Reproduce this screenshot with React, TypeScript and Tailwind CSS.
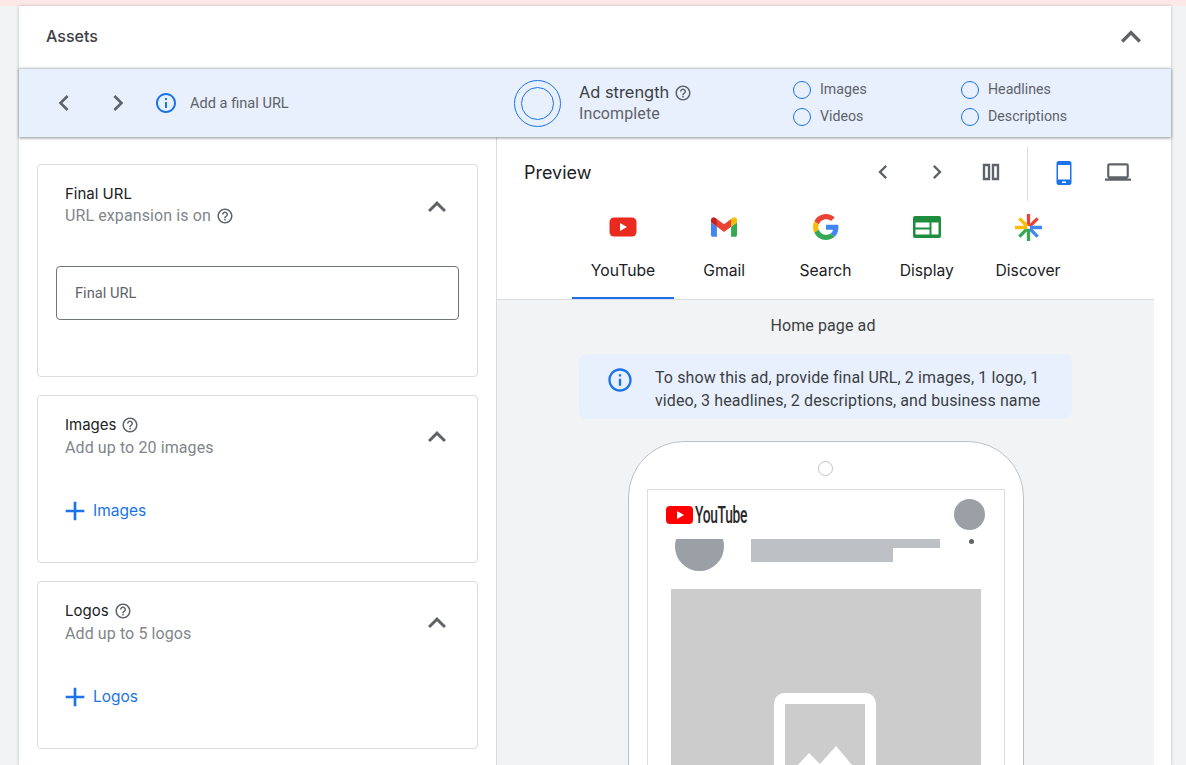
const HEADING = "font-['Inter','Noto_Sans',sans-serif]";

const Icon = ({ d, size, className }: { d: string; size: number; className?: string }) => (
  <svg width={size} height={size} viewBox="0 0 24 24" fill="currentColor" className={className}>
    <path d={d} />
  </svg>
);

const CHEVRON_UP = "M12 8l-6 6 1.41 1.41L12 10.83l4.59 4.58L18 14z";
const CHEVRON_LEFT = "M15.41 7.41L14 6l-6 6 6 6 1.41-1.41L10.83 12z";
const CHEVRON_RIGHT = "M10 6L8.59 7.41 13.17 12l-4.58 4.59L10 18l6-6z";
const INFO =
  "M11 7h2v2h-2zm0 4h2v6h-2zm1-9C6.48 2 2 6.48 2 12s4.48 10 10 10 10-4.48 10-10S17.52 2 12 2zm0 18c-4.41 0-8-3.59-8-8s3.59-8 8-8 8 3.59 8 8-3.59 8-8 8z";
const HELP =
  "M11 18h2v-2h-2v2zm1-16C6.48 2 2 6.48 2 12s4.48 10 10 10 10-4.48 10-10S17.52 2 12 2zm0 18c-4.41 0-8-3.59-8-8s3.59-8 8-8 8 3.59 8 8-3.59 8-8 8zm0-14c-2.21 0-4 1.79-4 4h2c0-1.1.9-2 2-2s2 .9 2 2c0 2-3 1.75-3 5h2c0-2.25 3-2.5 3-5 0-2.21-1.79-4-4-4z";
const PLUS = "M19 13h-6v6h-2v-6H5v-2h6V5h2v6h6v2z";
const LAPTOP =
  "M20 18c1.1 0 1.99-.9 1.99-2L22 6c0-1.1-.9-2-2-2H4c-1.1 0-2 .9-2 2v10c0 1.1.9 2 2 2H0v2h24v-2h-4zM4 6h16v10H4V6z";

const Legend = ({ label }: { label: string }) => (
  <div className="flex items-center gap-[9px] h-[18px]">
    <span className="w-[18px] h-[18px] rounded-full border border-[#1a73e8]" />
    <span className="text-[14.2px] text-[#5f6368]">{label}</span>
  </div>
);

const SectionCard = ({
  title,
  help,
  sub,
  height,
  children,
}: {
  title: string;
  help?: boolean;
  sub: React.ReactNode;
  height: string;
  children: React.ReactNode;
}) => (
  <div className={`border border-[#dadce0] rounded-[4px] bg-white ${height}`}>
    <div className="flex justify-between pl-[27px] pr-[22px] pt-[18px]">
      <div>
        <div
          className={`flex items-center gap-[5px] ${help ? "h-[22px]" : "h-[23px]"} text-[15px] text-[#202124] ${HEADING}`}
        >
          {title}
          {help && <Icon d={HELP} size={18} className="text-[#5f6368]" />}
        </div>
        <div
          className={`${help ? "mt-[1px]" : "-mt-[1px]"} text-[16px] tracking-[0.1px] leading-[22px] text-[#80868b] flex items-center gap-[5px]`}
        >
          {sub}
        </div>
      </div>
      <Icon d={CHEVRON_UP} size={36} className={`text-[#5f6368] ${help ? "mt-[5px]" : "mt-[6px]"}`} />
    </div>
    {children}
  </div>
);

const AddLink = ({ label }: { label: string }) => (
  <div className="flex items-center pl-[21px] mt-[36px] text-[#1a73e8]">
    <Icon d={PLUS} size={32} />
    <span className={`ml-[2px] text-[15.5px] ${HEADING}`}>{label}</span>
  </div>
);

const YoutubeIcon = () => (
  <svg width="28" height="20" viewBox="0 0 28 20">
    <rect x="0.5" y="0.5" width="27" height="19" rx="4.5" fill="#ea2a1f" />
    <path d="M11 6l7 4-7 4z" fill="#fff" />
  </svg>
);

const GmailIcon = () => (
  <svg width="26" height="20" viewBox="52 42 88 66">
    <path fill="#4285f4" d="M58 108h14V74L52 59v43c0 3.32 2.69 6 6 6" />
    <path fill="#34a853" d="M120 108h14c3.32 0 6-2.69 6-6V59l-20 15" />
    <path fill="#fbbc04" d="M120 48v26l20-15v-8c0-7.42-8.47-11.65-14.4-7.2" />
    <path fill="#ea4335" d="M72 74V48l24 18 24-18v26L96 92" />
    <path fill="#c5221f" d="M52 51v8l20 15V48l-5.6-4.2c-5.94-4.45-14.4-.22-14.4 7.2" />
  </svg>
);

const GoogleIcon = () => (
  <svg width="26" height="26" viewBox="0 0 48 48">
    <path fill="#EA4335" d="M24 9.5c3.54 0 6.71 1.22 9.21 3.6l6.85-6.85C35.9 2.38 30.47 0 24 0 14.62 0 6.51 5.38 2.56 13.22l7.98 6.19C12.43 13.72 17.74 9.5 24 9.5z" />
    <path fill="#4285F4" d="M46.98 24.55c0-1.57-.15-3.09-.38-4.55H24v9.02h12.94c-.58 2.96-2.26 5.48-4.78 7.18l7.73 6c4.51-4.18 7.09-10.36 7.09-17.65z" />
    <path fill="#FBBC05" d="M10.53 28.59c-.48-1.45-.76-2.99-.76-4.59s.27-3.14.76-4.59l-7.98-6.19C.92 16.46 0 20.12 0 24c0 3.88.92 7.54 2.56 10.78l7.97-6.19z" />
    <path fill="#34A853" d="M24 48c6.48 0 11.93-2.13 15.89-5.81l-7.73-6c-2.15 1.45-4.92 2.3-8.16 2.3-6.26 0-11.57-4.22-13.47-9.91l-7.98 6.19C6.51 42.62 14.62 48 24 48z" />
  </svg>
);

const DisplayIcon = () => (
  <svg width="28" height="22" viewBox="0 0 28 22">
    <rect width="28" height="22" rx="2" fill="#1e8e3e" />
    <path d="M2.5 6.5h14v5h-14zM2.5 13.5h14v5h-14zM18.5 6.5h7v12h-7z" fill="#fff" />
  </svg>
);

const DiscoverIcon = () => (
  <svg width="27" height="27" viewBox="-14 -14 28 28" strokeWidth="3.4">
    <path d="M0-1.5V-14M1.2-1.2L9.5-9.5" stroke="#ea4335" />
    <path d="M1.5 0H14M1.2 1.2L9.5 9.5" stroke="#4285f4" />
    <path d="M0 1.5V14M-1.2 1.2L-9.5 9.5" stroke="#34a853" />
    <path d="M-1.5 0H-14M-1.2-1.2L-9.5-9.5" stroke="#fbbc04" />
  </svg>
);

const tabs = [
  { label: "YouTube", icon: <YoutubeIcon /> },
  { label: "Gmail", icon: <GmailIcon /> },
  { label: "Search", icon: <GoogleIcon /> },
  { label: "Display", icon: <DisplayIcon /> },
  { label: "Discover", icon: <DiscoverIcon /> },
];

const Phone = () => (
  <div className="w-[396px] ml-[131px] mt-[22px] h-[500px] bg-white border border-[#bdc1c6] rounded-t-[56px] px-[18px] pt-[19px]">
    <div className="w-[15px] h-[15px] mx-auto -translate-x-[1px] rounded-full border border-[#bdc1c6]" />
    <div className="mt-[13px] border border-[#dadce0] h-[460px]">
      <div className="flex justify-between pl-[18px] pr-[19px] pt-[9px]">
        <div className="flex items-center h-[18px] mt-[7px]">
          <svg width="27" height="18" viewBox="0 0 27 18">
            <rect width="27" height="18" rx="4" fill="#ff0000" />
            <path d="M11 5l7 4-7 4z" fill="#fff" />
          </svg>
          <span className="ml-[2px] w-[52px] translate-y-[1px] text-[23px] leading-[18px] font-medium tracking-[-0.5px] text-[#282828] origin-left scale-x-[0.6] whitespace-nowrap font-['Roboto',sans-serif]">
            YouTube
          </span>
        </div>
        <div className="w-[31px] h-[31px] rounded-full bg-[#9aa0a6]" />
      </div>
      <div className="flex pl-[27px] mt-[9px] h-[32px]">
        <div className="w-[49px] h-[32px] overflow-hidden flex items-end">
          <div className="w-[49px] h-[49px] shrink-0 rounded-full bg-[#9aa0a6]" />
        </div>
        <div className="ml-[27px] w-[189px]">
          <div className="h-[9px] bg-[#bdc1c6]" />
          <div className="h-[14px] w-[142px] bg-[#bdc1c6]" />
        </div>
        <div className="w-[5px] h-[5px] rounded-full bg-[#5f6368] ml-[29px]" />
      </div>
      <div className="mx-[23px] mt-[18px] h-[300px] bg-[#cccccc] flex justify-center pt-[104px] pr-[2px]">
        <svg width="102" height="110" viewBox="0 0 102 110" className="shrink-0">
          <rect x="5.5" y="5.5" width="91" height="120" rx="5" fill="none" stroke="#fff" strokeWidth="11" />
          <path d="M24 72l11-12 11 11 16-18 16 19v10H24z" fill="#fff" />
        </svg>
      </div>
    </div>
  </div>
);

export default function App() {
  return (
    <div className="h-[765px] overflow-hidden bg-[#f1f3f4] text-[#202124] font-['Roboto',sans-serif]">
      <div className="h-[6px] bg-[#fce8e6]" />
      <div className="ml-[19px] w-[1152px] h-[759px] bg-white shadow-[0_0_3px_rgba(60,64,67,0.3)]">
        <div className={`h-[62px] flex items-center justify-between pl-[27px] pr-[20px] text-[16px] font-medium text-[#3c4043] ${HEADING}`}>
          <span className="-mt-[3px]">Assets</span>
          <Icon d={CHEVRON_UP} size={40} className="text-[#5f6368]" />
        </div>
        <div className="relative z-10 h-[69px] flex items-center bg-[#e8f0fe] border-t border-[#cdd0d4] shadow-[0_1px_3px_rgba(60,64,67,0.6)]">
          <div className="w-[495px] flex items-center pl-[29px] text-[#5f6368]">
            <Icon d={CHEVRON_LEFT} size={32} />
            <Icon d={CHEVRON_RIGHT} size={32} className="ml-[22px]" />
            <Icon d={INFO} size={24} className="ml-[20px] text-[#1a73e8]" />
            <span className="ml-[12px] mt-[2px] text-[14.6px]">Add a final URL</span>
          </div>
          <div className="w-[47px] h-[47px] rounded-full border border-[#1a73e8] flex items-center justify-center">
            <div className="w-[33px] h-[33px] rounded-full border border-[#1a73e8]" />
          </div>
          <div className="ml-[18px] w-[214px]">
            <div className={`flex items-center gap-[5px] text-[16.4px] h-[23px] text-[#3c4043] ${HEADING}`}>
              Ad strength
              <Icon d={HELP} size={18} className="text-[#5f6368]" />
            </div>
            <div className="-mt-[1px] text-[16px] leading-[22px] tracking-[0.1px] text-[#5f6368]">Incomplete</div>
          </div>
          <div className="w-[168px] flex flex-col gap-[9px]">
            <Legend label="Images" />
            <Legend label="Videos" />
          </div>
          <div className="flex flex-col gap-[9px]">
            <Legend label="Headlines" />
            <Legend label="Descriptions" />
          </div>
        </div>
        <div className="flex">
          <div className="w-[478px] shrink-0 border-r border-[#dadce0] pl-[18px] pr-[18px] pt-[27px] flex flex-col gap-[18px]">
            <SectionCard
              title="Final URL"
              height="h-[213px]"
              sub={
                <>
                  URL expansion is on
                  <Icon d={HELP} size={18} className="text-[#5f6368]" />
                </>
              }
            >
              <div className="mx-[18px] mt-[39px] h-[54px] border border-[#70757a] rounded-[4px] flex items-center pl-[18px] text-[14.7px] text-[#5f6368]">
                Final URL
              </div>
            </SectionCard>
            <SectionCard title="Images" help height="h-[168px]" sub="Add up to 20 images">
              <AddLink label="Images" />
            </SectionCard>
            <SectionCard title="Logos" help height="h-[168px]" sub="Add up to 5 logos">
              <AddLink label="Logos" />
            </SectionCard>
          </div>
          <div className="w-[657px] shrink-0">
            <div className="h-[163px] border-b border-[#dadce0] bg-white">
              <div className="flex items-center pl-[27px] h-[64px]">
                <span className={`w-[345px] text-[18px] mt-[6px] ${HEADING}`}>Preview</span>
                <Icon d={CHEVRON_LEFT} size={28} className="text-[#5f6368] mt-[6px]" />
                <Icon d={CHEVRON_RIGHT} size={28} className="ml-[26px] text-[#5f6368] mt-[6px]" />
                <svg width="24" height="24" viewBox="0 0 24 24" fill="none" stroke="#5f6368" strokeWidth="2.4" className="ml-[28px] mt-[6px]">
                  <path d="M5 5h5v14H5zM14 5h5v14h-5z" />
                </svg>
                <div className="w-px h-[54px] bg-[#dadce0] ml-[24px] mt-[9px]" />
                <svg width="24" height="26" viewBox="0 0 24 26" className="ml-[24px] mt-[8px]">
                  <path
                    fillRule="evenodd"
                    d="M7 1h10a2.5 2.5 0 0 1 2.5 2.5v19A2.5 2.5 0 0 1 17 25H7a2.5 2.5 0 0 1-2.5-2.5v-19A2.5 2.5 0 0 1 7 1zM6 5v14.5h12V5zM10 21.5v1.5h4v-1.5z"
                    fill="#1a73e8"
                  />
                </svg>
                <Icon d={LAPTOP} size={26} className="ml-[29px] text-[#5f6368] mt-[6px]" />
              </div>
              <div className="flex justify-center">
                {tabs.map((tab, i) => (
                  <div
                    key={tab.label}
                    className={`w-[101.25px] h-[98px] flex flex-col items-center border-b-2 ${
                      i === 0 ? "border-[#1a73e8]" : "border-transparent"
                    }`}
                  >
                    <div className="h-[28px] flex items-center justify-center mt-[12px]">{tab.icon}</div>
                    <div className={`mt-[18px] text-[15.7px] whitespace-nowrap text-[#202124] ${HEADING}`}>{tab.label}</div>
                  </div>
                ))}
              </div>
            </div>
            <div className="bg-[#f1f3f4] h-[470px] pt-[14px]">
              <div className="text-center pr-[5px] text-[16px] tracking-[0.1px] leading-[24px] text-[#3c4043]">Home page ad</div>
              <div className="mx-[82px] mt-[16px] w-[493px] h-[65px] rounded-[8px] bg-[#e8f0fe] flex items-center pl-[27px]">
                <Icon d={INFO} size={28} className="text-[#1a73e8] shrink-0 mb-[14px]" />
                <div className="ml-[21px] mt-[5px] text-[16px] tracking-[0.1px] leading-[23px] text-[#3c4043] whitespace-nowrap">
                  To show this ad, provide final URL, 2 images, 1 logo, 1
                  <br />
                  video, 3 headlines, 2 descriptions, and business name
                </div>
              </div>
              <Phone />
            </div>
          </div>
        </div>
      </div>
    </div>
  );
}
